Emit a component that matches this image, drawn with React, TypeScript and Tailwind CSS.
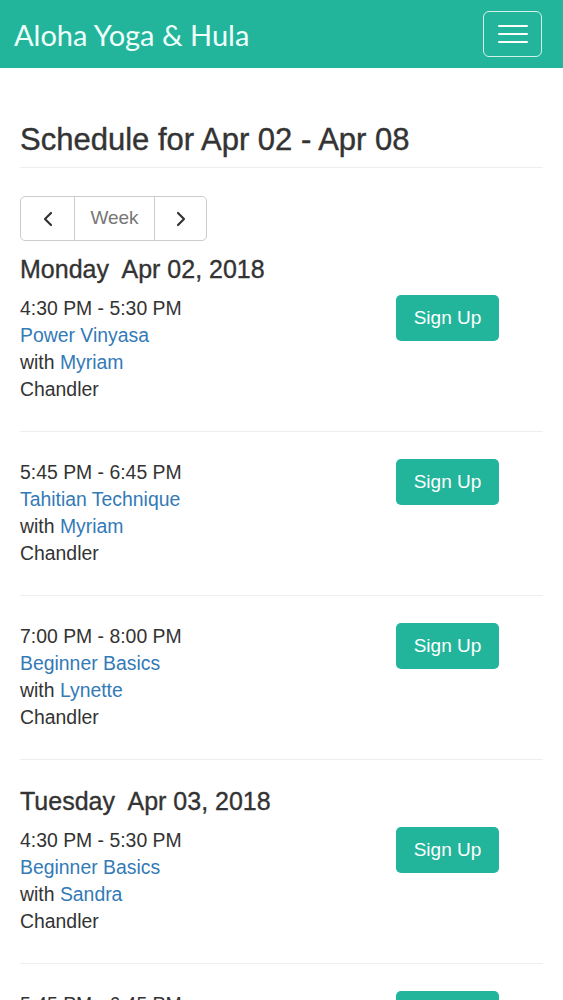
import React from "react";

type ClassItem = {
  time: string;
  name: string;
  teacher: string;
  location: string;
};

type Day = {
  day: string;
  date: string;
  classes: ClassItem[];
};

const days: Day[] = [
  {
    day: "Monday",
    date: "Apr 02, 2018",
    classes: [
      { time: "4:30 PM - 5:30 PM", name: "Power Vinyasa", teacher: "Myriam", location: "Chandler" },
      { time: "5:45 PM - 6:45 PM", name: "Tahitian Technique", teacher: "Myriam", location: "Chandler" },
      { time: "7:00 PM - 8:00 PM", name: "Beginner Basics", teacher: "Lynette", location: "Chandler" },
    ],
  },
  {
    day: "Tuesday",
    date: "Apr 03, 2018",
    classes: [
      { time: "4:30 PM - 5:30 PM", name: "Beginner Basics", teacher: "Sandra", location: "Chandler" },
      { time: "5:45 PM - 6:45 PM", name: "Tahitian Technique", teacher: "Myriam", location: "Chandler" },
    ],
  },
];

const Chevron: React.FC<{ dir: "left" | "right" }> = ({ dir }) => (
  <svg width="12" height="16" viewBox="0 0 12 16" fill="none">
    <polyline
      points={dir === "left" ? "9,2 3,8 9,14" : "3,2 9,8 3,14"}
      stroke="#333"
      strokeWidth="2.2"
      strokeLinecap="round"
      strokeLinejoin="round"
    />
  </svg>
);

const App: React.FC = () => {
  return (
    <div className="min-h-screen bg-white font-['Liberation_Sans',Arial,sans-serif] text-[#333]">
      {/* Navbar */}
      <nav className="flex h-[68px] items-center justify-between bg-[#22b59b] pl-[14px] pr-[21px]">
        <span className="font-['Lato',sans-serif] text-[29px] leading-none text-[#effffb]">
          Aloha Yoga &amp; Hula
        </span>
        <button className="flex h-[46px] w-[59px] flex-col items-center justify-center gap-[6px] rounded-[6px] border border-white/80">
          <span className="h-[2px] w-[30px] rounded bg-white" />
          <span className="h-[2px] w-[30px] rounded bg-white" />
          <span className="h-[2px] w-[30px] rounded bg-white" />
        </button>
      </nav>

      <main className="px-[20px]">
        <h1 className="mt-[54px] border-b border-[#eee] pb-[9px] text-[31px] leading-[36px] [-webkit-text-stroke:0.4px_#333]">
          Schedule for Apr 02 - Apr 08
        </h1>

        {/* Week nav */}
        <div className="mt-[28px] flex h-[45px] w-[187px] overflow-hidden rounded-[5px] border border-[#ccc]">
          <button className="flex w-[54px] items-center justify-center border-r border-[#ccc]">
            <Chevron dir="left" />
          </button>
          <span className="flex w-[80px] items-center justify-center border-r border-[#ccc] text-[19px] text-[#777]">
            Week
          </span>
          <button className="flex flex-1 items-center justify-center">
            <Chevron dir="right" />
          </button>
        </div>

        {days.map((d, di) => (
          <section key={d.day}>
            <h3
              className={
                di === 0
                  ? "mt-[13px] text-[25px] leading-[30px] [-webkit-text-stroke:0.35px_#333]"
                  : "mt-[26px] text-[25px] leading-[30px] [-webkit-text-stroke:0.35px_#333]"
              }
            >
              {d.day}&nbsp; {d.date}
            </h3>
            {d.classes.map((c, ci) => (
              <div
                key={ci}
                className={
                  ci === 0
                    ? "grid grid-cols-[376px_auto] border-b border-[#eee] pt-[11px] pb-[28px]"
                    : "grid grid-cols-[376px_auto] border-b border-[#eee] pt-[27px] pb-[28px]"
                }
              >
                <div className="text-[19.4px] leading-[27px]">
                  <div>{c.time}</div>
                  <a className="block text-[#337ab7]">{c.name}</a>
                  <div>
                    with <a className="text-[#337ab7]">{c.teacher}</a>
                  </div>
                  <div>{c.location}</div>
                </div>
                <div>
                  <button className="h-[46px] w-[103px] rounded-[5px] bg-[#22b59b] text-[19px] text-white">
                    Sign Up
                  </button>
                </div>
              </div>
            ))}
          </section>
        ))}
      </main>
    </div>
  );
};

export default App;
